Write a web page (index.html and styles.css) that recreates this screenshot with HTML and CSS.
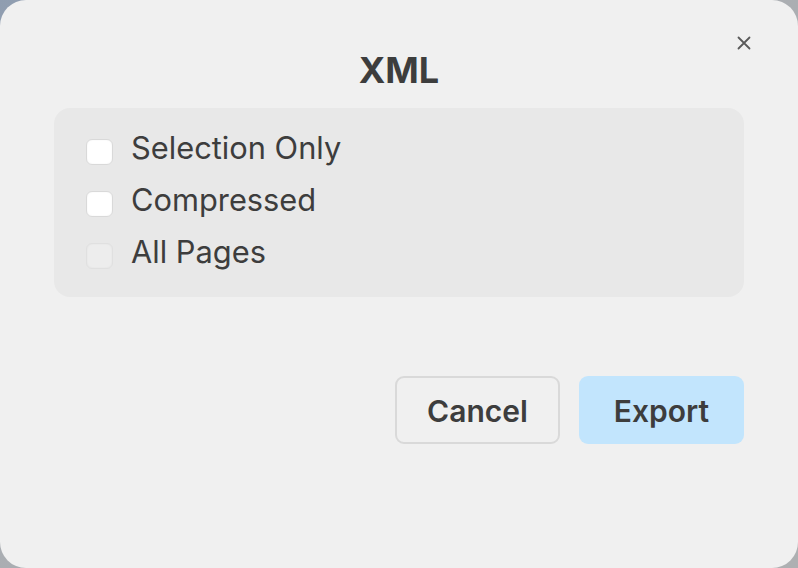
FILE: index.html
```html
<!DOCTYPE html>
<html>
<head>
<meta charset="utf-8">
<link rel="stylesheet" href="styles.css">
</head>
<body>
<div class="dialog">
  <button class="close" aria-label="Close">
    <svg width="14" height="14" viewBox="0 0 14 14"><path d="M1.5 1.5 L12.5 12.5 M12.5 1.5 L1.5 12.5" stroke="#5a5a5a" stroke-width="1.8" fill="none" stroke-linecap="round"/></svg>
  </button>
  <h1 class="title">XML</h1>
  <div class="panel">
    <label class="row"><span class="box"></span><span class="label">Selection Only</span></label>
    <label class="row"><span class="box"></span><span class="label">Compressed</span></label>
    <label class="row"><span class="box box-disabled"></span><span class="label">All Pages</span></label>
  </div>
  <div class="actions">
    <button class="btn btn-cancel">Cancel</button>
    <button class="btn btn-export">Export</button>
  </div>
</div>
</body>
</html>
```

FILE: styles.css
```css
html, body {
  margin: 0;
  padding: 0;
}
body {
  width: 798px;
  height: 568px;
  background: linear-gradient(135deg, #8f9db0 0%, #a9adb2 30%, #aeb0b2 100%);
  font-family: Inter, "Liberation Sans", sans-serif;
  color: #3d3d3d;
  overflow: hidden;
}
.dialog {
  position: relative;
  box-sizing: border-box;
  width: 798px;
  height: 568px;
  background: #f0f0f0;
  border-radius: 26px;
  padding: 48px 54px 0;
}
.close {
  position: absolute;
  top: 36px;
  right: 47px;
  width: 14px;
  height: 14px;
  padding: 0;
  border: none;
  background: none;
  display: flex;
}
.title {
  margin: 0;
  text-align: center;
  font-size: 36px;
  line-height: 44px;
  font-weight: 700;
  color: #3d3d3d;
}
.panel {
  margin-top: 16px;
  height: 189px;
  box-sizing: border-box;
  background: #e8e8e8;
  border-radius: 16px;
  padding: 18px 32px 15px;
  display: flex;
  flex-direction: column;
}
.row {
  height: 52px;
  display: flex;
  align-items: center;
  gap: 18px;
}
.box {
  box-sizing: border-box;
  width: 27px;
  height: 26px;
  background: #ffffff;
  border: 1px solid #d9d9d9;
  border-radius: 6px;
  box-shadow: inset 0 0 2px rgba(0,0,0,0.06);
}
.box-disabled {
  background: #ededed;
  border-color: #e0e0e0;
}
.label {
  font-size: 30.8px;
  line-height: 36px;
  padding-bottom: 9px;
  color: #3d3d3d;
}
.actions {
  margin-top: 79px;
  display: flex;
  justify-content: flex-end;
  gap: 19px;
}
.btn {
  box-sizing: border-box;
  width: 165px;
  height: 68px;
  border-radius: 9px;
  font-family: Inter, "Liberation Sans", sans-serif;
  font-size: 30px;
  font-weight: 600;
  color: #3d3d3d;
  padding: 2px 0 0;
}
.btn-cancel {
  background: #f0f0f0;
  border: 2px solid #d9d9d9;
}
.btn-export {
  background: #c2e5fd;
  border: none;
}
```
